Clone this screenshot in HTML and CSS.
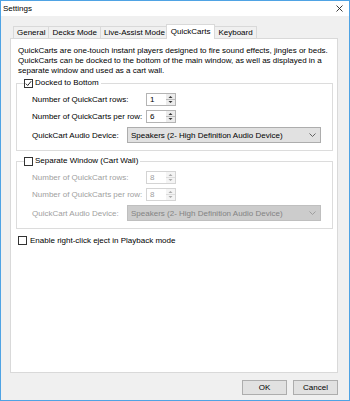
FILE: index.html
```html
<!DOCTYPE html>
<html lang="en">
<head>
    <meta charset="UTF-8">
    <title>Settings</title>
    <link rel="stylesheet" href="styles.css">
</head>
<body>

<div class="window">
    <div class="titlebar">
        <span class="title">Settings</span>
        <svg class="close" width="7" height="7" viewBox="0 0 7 7">
            <path d="M0.5 0.5 L6.5 6.5 M6.5 0.5 L0.5 6.5" stroke="#222" stroke-width="0.9" fill="none"/>
        </svg>
    </div>

    <div class="body">
        <div class="tabs">
            <div class="tab">General</div>
            <div class="tab">Decks Mode</div>
            <div class="tab">Live-Assist Mode</div>
            <div class="tab active">QuickCarts</div>
            <div class="tab">Keyboard</div>
        </div>

        <div class="panel">
            <p class="desc">QuickCarts are one-touch instant players designed to fire sound effects, jingles or beds. QuickCarts can be docked to the bottom of the main window, as well as displayed in a separate window and used as a cart wall.</p>

            <fieldset class="group">
                <legend>
                    <span class="check">
                        <svg width="7" height="7" viewBox="0 0 7 7"><path d="M0.8 3.6 L2.7 5.5 L6.2 1.2" stroke="#222" stroke-width="1" fill="none"/></svg>
                    </span>
                    Docked to Bottom
                </legend>
                <div class="rows">
                    <div class="row">
                        <span class="lbl">Number of QuickCart rows:</span>
                        <span class="spin"><span class="spin-val">1</span><span class="spin-btn"><svg width="9" height="11" viewBox="0 0 9 11"><path d="M2.5 4 L4.5 2 L6.5 4 Z M2.5 7 L4.5 9 L6.5 7 Z" fill="#333"/><path d="M0 5.5 H9" stroke="#bbb" stroke-width="1"/></svg></span></span>
                    </div>
                    <div class="row">
                        <span class="lbl">Number of QuickCarts per row:</span>
                        <span class="spin"><span class="spin-val">6</span><span class="spin-btn"><svg width="9" height="11" viewBox="0 0 9 11"><path d="M2.5 4 L4.5 2 L6.5 4 Z M2.5 7 L4.5 9 L6.5 7 Z" fill="#333"/><path d="M0 5.5 H9" stroke="#bbb" stroke-width="1"/></svg></span></span>
                    </div>
                    <div class="row combo-row">
                        <span class="lbl short">QuickCart Audio Device:</span>
                        <span class="combo">
                            <span>Speakers (2- High Definition Audio Device)</span>
                            <svg width="7" height="4" viewBox="0 0 7 4"><path d="M0.5 0.5 L3.5 3.5 L6.5 0.5" stroke="#555" stroke-width="0.9" fill="none"/></svg>
                        </span>
                    </div>
                </div>
            </fieldset>

            <fieldset class="group disabled">
                <legend>
                    <span class="check"></span>
                    Separate Window (Cart Wall)
                </legend>
                <div class="rows">
                    <div class="row">
                        <span class="lbl">Number of QuickCart rows:</span>
                        <span class="spin"><span class="spin-val">8</span><span class="spin-btn"><svg width="9" height="11" viewBox="0 0 9 11"><path d="M2.5 4 L4.5 2 L6.5 4 Z M2.5 7 L4.5 9 L6.5 7 Z" fill="#aaa"/><path d="M0 5.5 H9" stroke="#ddd" stroke-width="1"/></svg></span></span>
                    </div>
                    <div class="row">
                        <span class="lbl">Number of QuickCarts per row:</span>
                        <span class="spin"><span class="spin-val">8</span><span class="spin-btn"><svg width="9" height="11" viewBox="0 0 9 11"><path d="M2.5 4 L4.5 2 L6.5 4 Z M2.5 7 L4.5 9 L6.5 7 Z" fill="#aaa"/><path d="M0 5.5 H9" stroke="#ddd" stroke-width="1"/></svg></span></span>
                    </div>
                    <div class="row combo-row">
                        <span class="lbl short">QuickCart Audio Device:</span>
                        <span class="combo">
                            <span>Speakers (2- High Definition Audio Device)</span>
                            <svg width="7" height="4" viewBox="0 0 7 4"><path d="M0.5 0.5 L3.5 3.5 L6.5 0.5" stroke="#999" stroke-width="0.9" fill="none"/></svg>
                        </span>
                    </div>
                </div>
            </fieldset>

            <div class="option">
                <span class="check"></span>
                Enable right-click eject in Playback mode
            </div>
        </div>

        <div class="buttons">
            <button class="btn">OK</button>
            <button class="btn">Cancel</button>
        </div>
    </div>
</div>

</body>
</html>
```
FILE: styles.css
```css
body {
    margin: 0;
    font-family: "Liberation Sans", Arial, sans-serif;
    font-size: 8px;
    color: #000;
}

.window {
    width: 350px;
    height: 401px;
    box-sizing: border-box;
    border: 1px solid #4fa3e4;
    display: flex;
    flex-direction: column;
    background-color: #fff;
}

/* Barre de titre */
.titlebar {
    height: 15px;
    display: flex;
    align-items: center;
    justify-content: space-between;
    padding: 0 6px 0 2px;
    background-color: #fff;
}

.title {
    font-size: 8px;
}

.body {
    flex: 1;
    display: flex;
    flex-direction: column;
    padding: 9px 11px 5px 9px;
    background-color: #f0f0f0;
}

/* Onglets */
.tabs {
    height: 13px;
    display: flex;
    align-items: flex-end;
    padding-left: 3px;
}

.tab {
    height: 11px;
    line-height: 11px;
    padding: 0 3px;
    margin-right: -1px;
    border: 1px solid #d9d9d9;
    border-bottom: none;
    background-color: #f0f0f0;
    white-space: nowrap;
}

.tab.active {
    height: 14px;
    line-height: 13px;
    margin: 0 -1px -1px -2px;
    padding: 0 4px;
    background-color: #fff;
    position: relative;
    z-index: 1;
}

.panel {
    flex: 1;
    border: 1px solid #d9d9d9;
    background-color: #fff;
    padding: 7px 4px 0 5px;
}

.desc {
    margin: 0;
    padding: 0 2px;
    line-height: 10px;
}

/* Groupes */
.group {
    margin: 2px 0 0 0;
    padding: 0 0 7px 7px;
    border: 1px solid #dcdcdc;
    min-width: 0;
}

.group + .group {
    margin-top: 5px;
}

.group legend {
    padding: 0 2px 0 0;
    height: 10px;
    line-height: 10px;
    display: flex;
    align-items: center;
    gap: 2px;
}

.check {
    width: 7px;
    height: 7px;
    border: 1px solid #333;
    background-color: #fff;
    display: inline-flex;
    align-items: center;
    justify-content: center;
}

.rows {
    padding: 5px 0 0 8px;
    display: flex;
    flex-direction: column;
    gap: 4px;
}

.row {
    display: flex;
    align-items: center;
    height: 13px;
}

.combo-row {
    height: 16px;
}

.lbl {
    width: 114px;
    flex-shrink: 0;
}

.lbl.short {
    width: 95px;
}

.spin {
    width: 30px;
    height: 13px;
    box-sizing: border-box;
    border: 1px solid #b4b4b4;
    display: flex;
    background-color: #fff;
}

.spin-val {
    flex: 1;
    padding-left: 3px;
    line-height: 11px;
}

.spin-btn {
    width: 9px;
    display: flex;
    background-color: #ececec;
}

.combo {
    width: 194px;
    height: 16px;
    box-sizing: border-box;
    border: 1px solid #adadad;
    background-color: #e1e1e1;
    display: flex;
    align-items: center;
    justify-content: space-between;
    padding: 0 4px 0 3px;
    font-size: 8px;
}

.disabled .rows {
    color: #a0a0a0;
}

.disabled .spin {
    border-color: #d4d4d4;
}

.disabled .spin-btn {
    background-color: #f4f4f4;
}

.disabled .combo {
    background-color: #cccccc;
    border-color: #bfbfbf;
    color: #838383;
}

.option {
    margin: 6px 0 0 2px;
    display: flex;
    align-items: center;
    gap: 3px;
    height: 10px;
}

/* Boutons */
.buttons {
    margin-top: 7px;
    display: flex;
    justify-content: flex-end;
    gap: 6px;
    padding-right: 0;
}

.btn {
    width: 45px;
    height: 15px;
    padding: 0;
    font-family: "Liberation Sans", Arial, sans-serif;
    font-size: 8px;
    background-color: #e1e1e1;
    border: 1px solid #adadad;
    color: #000;
}
```
